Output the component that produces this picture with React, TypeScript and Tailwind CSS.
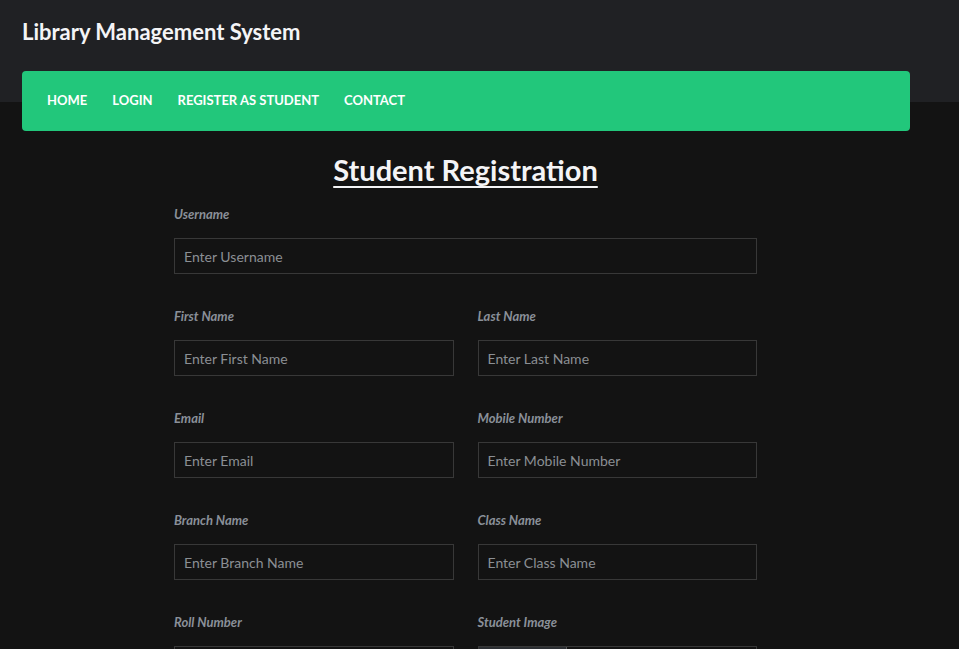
import React from 'react'

const font = { fontFamily: 'Lato, "Noto Sans", sans-serif' }

function Field({ label, placeholder }: { label: string; placeholder: string }) {
  return (
    <div className="flex flex-col">
      <label className="text-[13px] font-bold italic leading-5 text-[#8a9099]">{label}</label>
      <input
        className="mt-[14px] h-9 w-full border border-[#383838] bg-[#131313] px-[9px] text-[14px] text-[#ccc] placeholder:text-[#8b8f94] outline-none"
        placeholder={placeholder}
      />
    </div>
  )
}

export default function App() {
  const links = ['Home', 'Login', 'Register as Student', 'Contact']
  return (
    <div className="min-h-screen bg-[#131313] text-white" style={font}>
      <header className="bg-[linear-gradient(#202124_102px,#131313_102px)] px-[22px] pt-[18px]">
        <h1 className="text-[22px] font-bold leading-[28px] text-[#f4f4f6]">Library Management System</h1>
        <nav className="mt-[25px] flex h-[60px] w-[888px] items-center gap-[25px] rounded bg-[#22c77b] px-[25px]">
          {links.map((l) => (
            <a key={l} className="text-[13px] font-bold uppercase text-white">
              {l}
            </a>
          ))}
        </nav>
      </header>

      <main className="ml-[174px] w-[583px] pt-[21px]">
        <h2 className="text-center text-[29px] font-bold leading-9 text-[#f4f4f6] underline underline-offset-[5px] decoration-2">
          Student Registration
        </h2>
        <div className="mt-[16px] flex flex-col gap-[32px]">
          <Field label="Username" placeholder="Enter Username" />
          <div className="grid grid-cols-2 gap-x-6 gap-y-[32px]">
            <Field label="First Name" placeholder="Enter First Name" />
            <Field label="Last Name" placeholder="Enter Last Name" />
            <Field label="Email" placeholder="Enter Email" />
            <Field label="Mobile Number" placeholder="Enter Mobile Number" />
            <Field label="Branch Name" placeholder="Enter Branch Name" />
            <Field label="Class Name" placeholder="Enter Class Name" />
            <Field label="Roll Number" placeholder="" />
            <div className="flex flex-col">
              <label className="text-[13px] font-bold italic leading-5 text-[#8a9099]">Student Image</label>
              <div className="mt-[14px] flex h-9 border border-[#383838]">
                <span className="w-[88px] border-r border-[#555] bg-[#2c2f33]" />
                <span className="flex-1" />
              </div>
            </div>
          </div>
        </div>
      </main>
    </div>
  )
}
